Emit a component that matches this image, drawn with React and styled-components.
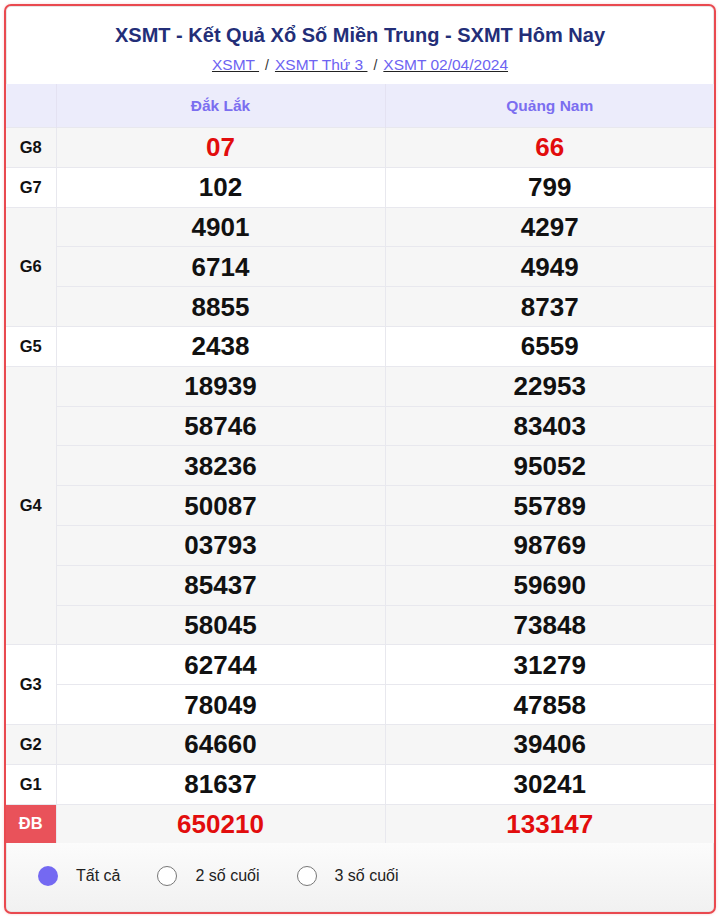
import React, { useState } from 'react'
import styled, { createGlobalStyle } from 'styled-components'

const GlobalStyle = createGlobalStyle`
  body {
    margin: 0;
    background: #fff;
    font-family: "Liberation Sans", Arial, sans-serif;
  }
`

const prizes = [
    { name: 'G8', a: ['07'], b: ['66'], red: true },
    { name: 'G7', a: ['102'], b: ['799'] },
    { name: 'G6', a: ['4901', '6714', '8855'], b: ['4297', '4949', '8737'] },
    { name: 'G5', a: ['2438'], b: ['6559'] },
    {
        name: 'G4',
        a: ['18939', '58746', '38236', '50087', '03793', '85437', '58045'],
        b: ['22953', '83403', '95052', '55789', '98769', '59690', '73848'],
    },
    { name: 'G3', a: ['62744', '78049'], b: ['31279', '47858'] },
    { name: 'G2', a: ['64660'], b: ['39406'] },
    { name: 'G1', a: ['81637'], b: ['30241'] },
    { name: 'ĐB', a: ['650210'], b: ['133147'], red: true, special: true },
]

const modes = ['Tất cả', '2 số cuối', '3 số cuối']

export default function App() {
    const [mode, setMode] = useState(0)

    const cut = (n) => (mode === 0 ? n : n.slice(mode === 1 ? -2 : -3))

    return (
        <Page>
            <GlobalStyle />
            <Card>
                <Heading>
                    <Title>XSMT - Kết Quả Xổ Số Miền Trung - SXMT Hôm Nay</Title>
                    <Crumbs>
                        <Crumb href="#">XSMT </Crumb>
                        <Sep>/</Sep>
                        <Crumb href="#">XSMT Thứ 3 </Crumb>
                        <Sep>/</Sep>
                        <Crumb href="#">XSMT 02/04/2024</Crumb>
                    </Crumbs>
                </Heading>
                <Table>
                    <colgroup>
                        <col style={{ width: 50 }} />
                        <col />
                        <col />
                    </colgroup>
                    <thead>
                        <tr>
                            <HeadCell />
                            <HeadCell>Đắk Lắk</HeadCell>
                            <HeadCell>Quảng Nam</HeadCell>
                        </tr>
                    </thead>
                    <tbody>
                        {prizes.map((p, i) =>
                            p.a.map((num, j) => (
                                <Row key={p.name + j} $alt={i % 2 === 0}>
                                    {j === 0 && (
                                        <LabelCell rowSpan={p.a.length} $special={p.special}>
                                            {p.name}
                                        </LabelCell>
                                    )}
                                    <NumCell $red={p.red}>{cut(num)}</NumCell>
                                    <NumCell $red={p.red}>{cut(p.b[j])}</NumCell>
                                </Row>
                            ))
                        )}
                    </tbody>
                </Table>
                <Footer>
                    {modes.map((m, i) => (
                        <Option key={m} onClick={() => setMode(i)}>
                            <Radio $on={mode === i} />
                            {m}
                        </Option>
                    ))}
                </Footer>
            </Card>
        </Page>
    )
}

const Page = styled.div`
  padding: 4px;
`

const Card = styled.div`
  border: 2px solid #e9494f;
  border-radius: 7px;
  overflow: hidden;
  background: linear-gradient(to bottom, #fff 90%, #f1f1f1);
  box-shadow: 0 0 3px rgba(233, 73, 79, 0.25), inset 0 0 0 1px #e6e6e6;
`

const Heading = styled.div`
  padding: 16px 0 9px;
  text-align: center;
`

const Title = styled.h1`
  margin: 0;
  font-size: 20px;
  line-height: 26px;
  font-weight: 700;
  color: #232e78;
`

const Crumbs = styled.div`
  margin-top: 7px;
  font-size: 15.5px;
  line-height: 20px;
  color: #333;
`

const Crumb = styled.a`
  color: #6d63f2;
  text-decoration: underline;
  text-decoration-color: #222;
  white-space: pre;
`

const Sep = styled.span`
  margin: 0 6px;
  font-size: 14px;
`

const Table = styled.table`
  width: 100%;
  border-collapse: collapse;
  table-layout: fixed;
`

const HeadCell = styled.th`
  height: 43px;
  padding: 0;
  background: #ececfb;
  color: #7b6ef0;
  font-size: 15.5px;
  font-weight: 700;
  border-left: 1px solid #e4e2f2;
  &:first-child {
    border-left: none;
  }
`

const Row = styled.tr`
  background: ${(p) => (p.$alt ? '#f6f6f6' : '#fff')};
`

const LabelCell = styled.td`
  padding: 0;
  text-align: center;
  font-size: 16.5px;
  font-weight: 700;
  color: ${(p) => (p.$special ? '#fff' : '#111')};
  background: ${(p) => (p.$special ? '#e9525a' : 'transparent')};
  border-top: 1px solid #e8e8ee;
`

const NumCell = styled.td`
  height: 38.8px;
  padding: 0;
  text-align: center;
  font-size: 26px;
  font-weight: 700;
  line-height: 38px;
  color: ${(p) => (p.$red ? '#e20d0d' : '#111')};
  border-top: 1px solid #e8e8ee;
  border-left: 1px solid #e8e8ee;
`

const Footer = styled.div`
  display: flex;
  align-items: center;
  gap: 37px;
  padding: 23px 0 26px 32px;
`

const Option = styled.label`
  display: flex;
  align-items: center;
  gap: 18px;
  font-size: 16px;
  color: #222;
  cursor: pointer;
`

const Radio = styled.span`
  width: 20px;
  height: 20px;
  box-sizing: border-box;
  border-radius: 50%;
  background: ${(p) => (p.$on ? '#7469f2' : '#fff')};
  border: ${(p) => (p.$on ? 'none' : '1px solid #777')};
`
